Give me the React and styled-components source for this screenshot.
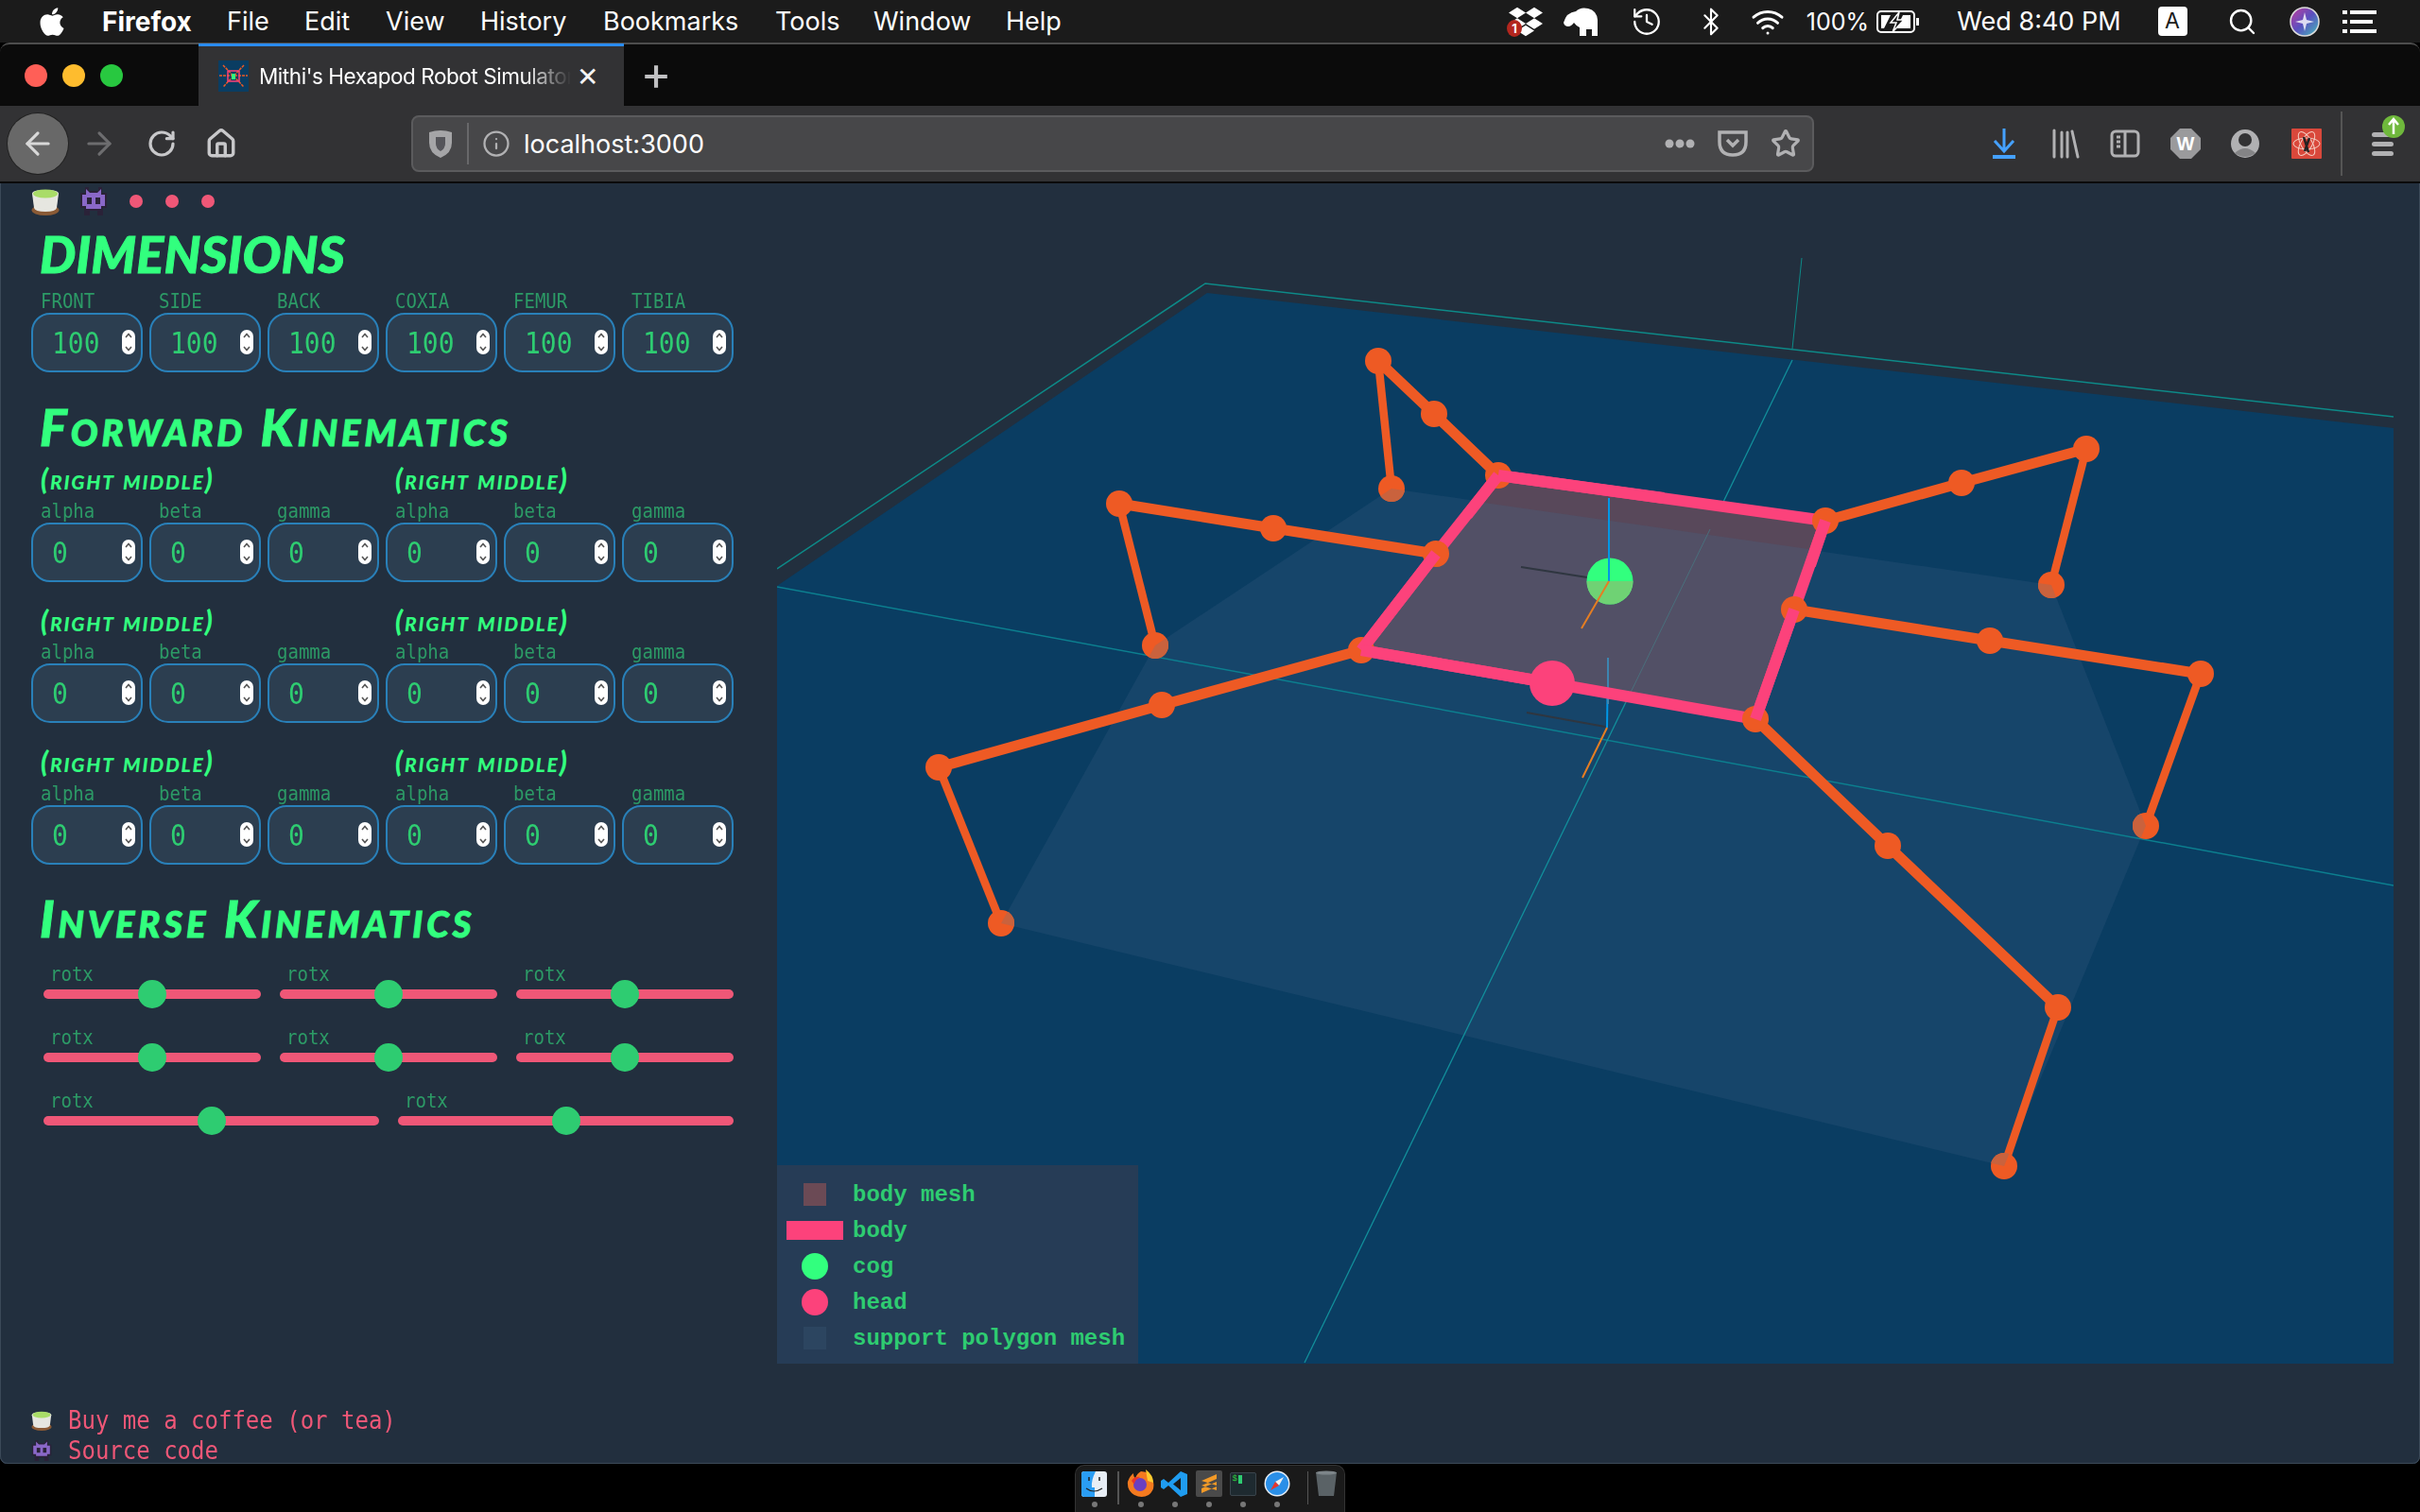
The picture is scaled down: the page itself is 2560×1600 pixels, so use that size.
import React from "react";
import styled, { createGlobalStyle } from "styled-components";
import { FaApple, FaDropbox } from "react-icons/fa";
import {
  ArrowLeft,
  ArrowRight,
  RotateCw,
  Home,
  Info,
  Star,
  Bluetooth,
  Wifi,
  Search,
  History,
} from "lucide-react";

const menuItems = [
  ["File", 82],
  ["Edit", 86],
  ["View", 100],
  ["History", 130],
  ["Bookmarks", 182],
  ["Tools", 104],
  ["Window", 140],
  ["Help", 90],
];

// all coordinates of the plot are page pixels, see viewBox on the Scene
const legs = [
  [[1585, 503], [1517, 438], [1458, 382], [1472, 517]],
  [[1519, 586], [1347, 559], [1184, 533], [1222, 683]],
  [[1440, 688], [1229, 746], [993, 812], [1059, 977]],
  [[1931, 551], [2075, 511], [2207, 475], [2170, 619]],
  [[1898, 645], [2105, 678], [2328, 713], [2270, 874]],
  [[1857, 761], [1997, 895], [2177, 1066], [2120, 1234]],
];
const support = "1472,517 2170,619 2270,874 2120,1234 1059,977 1222,683";
const body = "1585,503 1931,551 1898,645 1857,761 1642,723 1440,688 1519,586";
// pink pieces that lie over the shoulder joints
const bodyOver = [
  "1440,688 1519,586",
  "1857,761 1898,645",
  "1915,598 1931,551",
  "1552,545 1585,503",
  "1760,527 1585,503",
  "1642,723 1440,688",
];
const pts = (a) => a.map((p) => p.join(",")).join(" ");

const dimensions = ["FRONT", "SIDE", "BACK", "COXIA", "FEMUR", "TIBIA"];
const angles = ["alpha", "beta", "gamma"];

const Tea = ({ size }) => (
  <svg width={size} height={size} viewBox="0 0 30 30">
    <ellipse cx="15" cy="24.5" rx="14.5" ry="5.5" fill="#8a5a35" />
    <path d="M1 7 Q1 3 15 3 Q29 3 29 7 L27 22 Q26 26 15 26 Q4 26 3 22 Z" fill="#e6e6e0" />
    <ellipse cx="15" cy="7" rx="13" ry="4.5" fill="#a9dc68" />
  </svg>
);

const Alien = ({ size }) => (
  <svg width={size} height={size} viewBox="0 0 30 30">
    <path d="M6 0 H10 V4 H20 V0 H24 V6 H29 V22 H25 V30 H19 V25 H11 V30 H5 V22 H1 V6 H6 Z" fill="#2a2238" />
    <path d="M7 2 L11 6 H19 L23 2 V8 H27 V20 H23 V23 H7 V20 H3 V8 H7 Z" fill="#8a68c8" />
    <rect x="8" y="11" width="5" height="7" fill="#2a2238" />
    <rect x="17" y="11" width="5" height="7" fill="#2a2238" />
  </svg>
);

const Elephant = () => (
  <svg width="40" height="32" viewBox="0 0 40 32" fill="#fff">
    <path d="M2 17 Q5 6 15 5 Q20 0 28 2 Q37 4 38 14 V31 H32 V24 H26 V31 H19 V22 Q15 20 13 17 Q10 21 7 21 Q3 21 2 17 Z" />
  </svg>
);

const Battery = () => (
  <svg width="46" height="26" viewBox="0 0 46 26" fill="none" stroke="#fff" strokeWidth="2">
    <rect x="1" y="2" width="39" height="22" rx="4" />
    <rect x="42" y="9" width="3" height="8" fill="#fff" stroke="none" />
    <path d="M5 6 H15 L8 20 H5 Z M36 6 H28 L21 20 H36 Z" fill="#fff" stroke="none" />
    <path d="M24 3 L15 14 H21 L17 24 L29 11 H22 Z" fill="#1b1b1b" stroke="#fff" strokeWidth="1.5" />
  </svg>
);

const MenuList = () => (
  <svg width="36" height="26" viewBox="0 0 36 26" fill="#fff">
    <rect x="0" y="1" width="5" height="4" />
    <rect x="8" y="1" width="28" height="4" />
    <rect x="0" y="11" width="5" height="4" />
    <rect x="8" y="11" width="24" height="4" />
    <rect x="0" y="21" width="5" height="4" />
    <rect x="8" y="21" width="28" height="4" />
  </svg>
);

const Siri = () => (
  <svg width="32" height="32" viewBox="0 0 32 32">
    <defs>
      <linearGradient id="siriA" x1="0" y1="0" x2="1" y2="1">
        <stop offset="0" stopColor="#c43c9c" />
        <stop offset="0.5" stopColor="#5a50c0" />
        <stop offset="1" stopColor="#44c0b8" />
      </linearGradient>
    </defs>
    <circle cx="16" cy="16" r="15" fill="url(#siriA)" stroke="#ddd" strokeWidth="1.5" />
    <path d="M16 6 L18 14 L26 16 L18 18 L16 26 L14 18 L6 16 L14 14 Z" fill="#fff" opacity="0.8" />
  </svg>
);

const Favicon = () => (
  <svg width="32" height="33" viewBox="0 0 32 33">
    <rect width="32" height="33" fill="#0a3d62" />
    <path d="M5 5 L27 28 M27 5 L5 28 M1 16 H31" stroke="#ee5a24" strokeWidth="1.5" strokeDasharray="3 1" />
    <rect x="10" y="11" width="12" height="11" fill="none" stroke="#fc427b" strokeWidth="1.5" />
    <rect x="14" y="14" width="4" height="6" fill="#32ff7e" />
  </svg>
);

const ShieldIcon = () => (
  <svg width="26" height="30" viewBox="0 0 26 30">
    <path d="M1 3 Q13 -1 25 3 V14 Q25 25 13 30 Q1 25 1 14 Z" fill="#a5a5a7" />
    <path d="M8 8 H18 V15 Q18 20 13 23 Q8 20 8 15 Z" fill="#55555a" />
  </svg>
);

const PocketIcon = () => (
  <svg width="32" height="30" viewBox="0 0 32 30" fill="none" stroke="#b1b1b3" strokeWidth="3.5">
    <path d="M2 3 H30 V13 Q30 27 16 27 Q2 27 2 13 Z" />
    <path d="M10 11 L16 17 L22 11" />
  </svg>
);

const Dots = () => (
  <svg width="32" height="10" viewBox="0 0 32 10" fill="#b1b1b3">
    <circle cx="5" cy="5" r="4.5" />
    <circle cx="16" cy="5" r="4.5" />
    <circle cx="27" cy="5" r="4.5" />
  </svg>
);

const DownloadIcon = () => (
  <svg width="26" height="34" viewBox="0 0 26 34" fill="none" stroke="#45a1ff" strokeWidth="3">
    <path d="M13 1 V24 M3 14 L13 25 L23 14" />
    <rect x="1" y="29" width="24" height="4" fill="#45a1ff" stroke="none" />
  </svg>
);

const LibraryIcon = () => (
  <svg width="30" height="32" viewBox="0 0 30 32" fill="none" stroke="#b1b1b3" strokeWidth="3" strokeLinecap="round">
    <path d="M3 2 V30 M11 4 V30 M17 4 V30 M22 3 L28 30" />
  </svg>
);

const SidebarIcon = () => (
  <svg width="32" height="30" viewBox="0 0 32 30" fill="none" stroke="#b1b1b3" strokeWidth="3">
    <rect x="2" y="2" width="28" height="26" rx="4" />
    <path d="M16 2 V28 M7 8 H11 M7 13 H11 M7 18 H11" />
  </svg>
);

const WIcon = () => (
  <svg width="32" height="32" viewBox="0 0 32 32">
    <path d="M10 0 H22 L32 10 V22 L22 32 H10 L0 22 V10 Z" fill="#9a9a9c" />
    <text x="16" y="23" textAnchor="middle" fontFamily="Liberation Sans" fontWeight="700" fontSize="20" fill="#fff">W</text>
  </svg>
);

const AccountIcon = () => (
  <svg width="30" height="32" viewBox="0 0 30 32">
    <circle cx="15" cy="16" r="15" fill="#b1b1b3" />
    <circle cx="15" cy="12" r="7" fill="#323234" />
    <path d="M4 26 Q15 16 26 26 Q15 34 4 26" fill="#323234" opacity="0.35" />
  </svg>
);

const ReactIcon = () => (
  <svg width="32" height="32" viewBox="0 0 32 32" fill="none" stroke="#f5d0c5" strokeWidth="1">
    <rect width="32" height="32" rx="1" fill="#d9483b" stroke="none" />
    <ellipse cx="16" cy="16" rx="14" ry="6" />
    <ellipse cx="16" cy="16" rx="14" ry="6" transform="rotate(60 16 16)" />
    <ellipse cx="16" cy="16" rx="14" ry="6" transform="rotate(120 16 16)" />
    <path d="M13 9 L18 25 M19 10 L14 24" stroke="#222" strokeWidth="2.5" />
  </svg>
);

const Hamburger = () => (
  <HamburgerSvg width="50" height="52" viewBox="0 0 50 52">
    <rect x="16" y="14" width="23" height="5" rx="2.5" fill="#b1b1b3" />
    <rect x="16" y="24" width="23" height="5" rx="2.5" fill="#b1b1b3" />
    <rect x="16" y="34" width="23" height="5" rx="2.5" fill="#b1b1b3" />
    <circle cx="39" cy="8" r="12" fill="#6fb83c" />
    <path d="M39 16 V1 M34 6 L39 0 L44 6" stroke="#fff" strokeWidth="2.5" fill="none" />
  </HamburgerSvg>
);

const Scene = () => (
  <SceneSvg viewBox="822 194 1710 1249">
    <defs>
      <clipPath id="supportClip">
        <polygon points={support} />
      </clipPath>
    </defs>
    <polygon points="822,620 1277,310 2532,453 2532,1443 822,1443" fill="#0a3d62" />
    <polyline points="822,602 1275,300 2532,441" fill="none" stroke="#0d8a88" strokeWidth="1.5" />
    <line x1="1906" y1="273" x2="1896" y2="369" stroke="#0d8a88" strokeWidth="1" />
    <polygon points={support} fill="#16456a" />
    <line x1="822" y1="621" x2="2532" y2="937" stroke="#0c7f8f" strokeWidth="1.5" />
    <line x1="1896" y1="381" x2="1380" y2="1442" stroke="#128f9b" strokeWidth="1.3" />

    <line x1="1701" y1="696" x2="1700" y2="770" stroke="#0097e6" strokeWidth="2" />
    <line x1="1700" y1="770" x2="1674" y2="823" stroke="#e67e22" strokeWidth="2" />
    <line x1="1698" y1="769" x2="1615" y2="754" stroke="#2f3640" strokeWidth="2" />

    <polygon points={body} fill="#525066" />
    <polygon points="1585,503 1931,551 1920,582 1563,531" fill="#58485a" />
    <line x1="1809" y1="560" x2="1719" y2="745" stroke="#4a6f7c" strokeWidth="1" />
    <line x1="1701" y1="696" x2="1701" y2="745" stroke="#3d85b0" strokeWidth="2" />

    <line x1="1679" y1="611" x2="1609" y2="600" stroke="#2f3640" strokeWidth="2" />
    <circle cx="1703" cy="615" r="24.5" fill="#32ff7e" />
    <path d="M1678.5 615 A24.5 24.5 0 0 0 1727.5 615 Z" fill="#6fd274" />
    <line x1="1702" y1="527" x2="1702" y2="615" stroke="#0097e6" strokeWidth="2" />
    <line x1="1702" y1="615" x2="1673" y2="665" stroke="#e67e22" strokeWidth="2" />

    <polygon points={body} fill="none" stroke="#fc427b" strokeWidth="12" strokeLinejoin="miter" />

    {legs.map((leg, i) => (
      <g key={i}>
        <polyline points={pts(leg.slice(0, 3))} fill="none" stroke="#ee5a24" strokeWidth="11" />
        <polyline points={pts(leg.slice(2))} fill="none" stroke="#ee5a24" strokeWidth="8.5" />
        {leg.map((p, j) => (
          <circle key={j} cx={p[0]} cy={p[1]} r="14" fill="#ee5a24" />
        ))}
        <circle cx={leg[3][0]} cy={leg[3][1]} r="14" fill="#c9623d" clipPath="url(#supportClip)" />
      </g>
    ))}

    {bodyOver.map((segment) => (
      <polyline key={segment} points={segment} fill="none" stroke="#fc427b" strokeWidth="12" />
    ))}
    <circle cx="1642" cy="723" r="24" fill="#fc427b" />
  </SceneSvg>
);

const Field = ({ label, value }) => (
  <FieldWrap>
    <FieldLabel>{label}</FieldLabel>
    <NumberBox>
      <NumberValue>{value}</NumberValue>
      <Spinner>
        <svg width="14" height="26" viewBox="0 0 14 26" fill="none" stroke="#555" strokeWidth="1.6">
          <path d="M4 8 L7 4.5 L10 8 M4 18 L7 21.5 L10 18" />
        </svg>
      </Spinner>
    </NumberBox>
  </FieldWrap>
);

const LegGroup = () => (
  <div>
    <SubHeading>(right middle)</SubHeading>
    <FieldRow $cols={3}>
      {angles.map((a) => (
        <Field key={a} label={a} value="0" />
      ))}
    </FieldRow>
  </div>
);

const Slider = () => (
  <div>
    <SliderLabel>rotx</SliderLabel>
    <Track>
      <Thumb />
    </Track>
  </div>
);

const App = () => (
  <Screen>
    <GlobalStyle />
    <MenuBar>
      <AppleSlot>
        <FaApple size={34} color="#fff" />
      </AppleSlot>
      <MenuItem $w={132} $bold>
        Firefox
      </MenuItem>
      {menuItems.map(([name, w]) => (
        <MenuItem key={name} $w={w}>
          {name}
        </MenuItem>
      ))}
      <StatusArea>
        <StatusSlot $w={48}>
          <FaDropbox size={36} color="#fff" />
          <Badge>1</Badge>
        </StatusSlot>
        <StatusSlot $w={68}>
          <Elephant />
        </StatusSlot>
        <StatusSlot $w={72}>
          <History size={34} color="#fff" strokeWidth={1.6} />
        </StatusSlot>
        <StatusSlot $w={64}>
          <Bluetooth size={32} color="#fff" strokeWidth={1.6} />
        </StatusSlot>
        <StatusSlot $w={56}>
          <Wifi size={36} color="#fff" strokeWidth={2} />
        </StatusSlot>
        <StatusSlot $w={146}>
          <StatusText>100%</StatusText>
          <Battery />
        </StatusSlot>
        <StatusSlot $w={226}>
          <StatusText $big>Wed 8:40 PM</StatusText>
        </StatusSlot>
        <StatusSlot $w={56}>
          <KeyBadge>A</KeyBadge>
        </StatusSlot>
        <StatusSlot $w={92}>
          <Search size={32} color="#fff" strokeWidth={1.8} />
        </StatusSlot>
        <StatusSlot $w={40}>
          <Siri />
        </StatusSlot>
        <StatusSlot $w={76}>
          <MenuList />
        </StatusSlot>
      </StatusArea>
    </MenuBar>

    <TabStrip>
      <Lights>
        <Light $c="#ff5f57" />
        <Light $c="#febc2e" />
        <Light $c="#28c840" />
      </Lights>
      <Tab>
        <Favicon />
        <TabTitle>Mithi's Hexapod Robot Simulator</TabTitle>
        <TabClose>✕</TabClose>
      </Tab>
      <NewTab>+</NewTab>
    </TabStrip>

    <Toolbar>
      <ToolSlot $w={64}>
        <BackCircle>
          <ArrowLeft size={38} color="#d8d8d8" strokeWidth={2} />
        </BackCircle>
      </ToolSlot>
      <ToolSlot $w={66}>
        <ArrowRight size={38} color="#6d6d6f" strokeWidth={2} />
      </ToolSlot>
      <ToolSlot $w={66}>
        <RotateCw size={32} color="#c8c8ca" strokeWidth={2.4} />
      </ToolSlot>
      <ToolSlot $w={60}>
        <Home size={34} color="#c8c8ca" strokeWidth={2.4} />
      </ToolSlot>
      <UrlBar>
        <ToolSlot $w={57}>
          <ShieldIcon />
        </ToolSlot>
        <UrlSep />
        <ToolSlot $w={58}>
          <Info size={30} color="#b1b1b3" strokeWidth={1.8} />
        </ToolSlot>
        <UrlText>localhost:3000</UrlText>
        <UrlActions>
          <ToolSlot $w={56}>
            <Dots />
          </ToolSlot>
          <ToolSlot $w={56}>
            <PocketIcon />
          </ToolSlot>
          <ToolSlot $w={56}>
            <Star size={32} color="#b1b1b3" strokeWidth={2.4} />
          </ToolSlot>
        </UrlActions>
      </UrlBar>
      <ToolIcons>
        <ToolSlot $w={64}>
          <DownloadIcon />
        </ToolSlot>
        <ToolSlot $w={66}>
          <LibraryIcon />
        </ToolSlot>
        <ToolSlot $w={60}>
          <SidebarIcon />
        </ToolSlot>
        <ToolSlot $w={68}>
          <WIcon />
        </ToolSlot>
        <ToolSlot $w={58}>
          <AccountIcon />
        </ToolSlot>
        <ToolSlot $w={72}>
          <ReactIcon />
        </ToolSlot>
        <ToolSep />
        <ToolSlot $w={80}>
          <Hamburger />
        </ToolSlot>
      </ToolIcons>
    </Toolbar>

    <Page>
      <Main>
        <Sidebar>
          <NavRow>
            <EmojiBox>
              <Tea size={30} />
            </EmojiBox>
            <EmojiBox>
              <Alien size={30} />
            </EmojiBox>
            <NavDots>
              <NavDot />
              <NavDot />
              <NavDot />
            </NavDots>
          </NavRow>

          <Heading $top={15} $spacing={0.2}>
            DIMENSIONS
          </Heading>
          <FieldRow $cols={6} $top={12}>
            {dimensions.map((d) => (
              <Field key={d} label={d} value="100" />
            ))}
          </FieldRow>

          <Heading $top={36}>Forward Kinematics</Heading>
          <LegGrid>
            {[0, 1, 2, 3, 4, 5].map((i) => (
              <LegGroup key={i} />
            ))}
          </LegGrid>

          <Heading $top={35}>Inverse Kinematics</Heading>
          <SliderGrid $cols={3}>
            {[0, 1, 2, 3, 4, 5].map((i) => (
              <Slider key={i} />
            ))}
          </SliderGrid>
          <SliderGrid $cols={2} $top={24}>
            <Slider />
            <Slider />
          </SliderGrid>
        </Sidebar>

        <Plot>
          <Scene />
          <Legend>
            <LegendRow>
              <LegendMark>
                <MeshSwatch $c="#6b4a55" />
              </LegendMark>
              body mesh
            </LegendRow>
            <LegendRow>
              <LegendMark>
                <BodySwatch />
              </LegendMark>
              body
            </LegendRow>
            <LegendRow>
              <LegendMark>
                <DotSwatch $c="#32ff7e" />
              </LegendMark>
              cog
            </LegendRow>
            <LegendRow>
              <LegendMark>
                <DotSwatch $c="#fc427b" />
              </LegendMark>
              head
            </LegendRow>
            <LegendRow>
              <LegendMark>
                <MeshSwatch $c="#2c4560" />
              </LegendMark>
              support polygon mesh
            </LegendRow>
          </Legend>
        </Plot>
      </Main>

      <Footer>
        <FooterRow>
          <Tea size={22} />
          <FooterLink>Buy me a coffee (or tea)</FooterLink>
        </FooterRow>
        <FooterRow>
          <Alien size={22} />
          <FooterLink>Source code</FooterLink>
        </FooterRow>
      </Footer>
    </Page>

    <DockArea>
      <Dock>
        <DockSlot $w={39}>
          <DockIcon>
            <svg width="27" height="27" viewBox="0 0 27 27">
              <rect width="27" height="27" rx="3" fill="#e8eef5" />
              <path d="M0 3 Q0 0 3 0 H15 Q10 10 11 17 H14 V27 H3 Q0 27 0 24 Z" fill="#2a9df4" />
              <path d="M8 6 V10 M19 6 V10" stroke="#222" strokeWidth="1.5" />
              <path d="M5 18 Q13 24 22 18" stroke="#222" strokeWidth="1.2" fill="none" />
            </svg>
          </DockIcon>
          <DockDot />
        </DockSlot>
        <DockSep />
        <DockApps>
          <DockSlot $w={36}>
            <DockIcon>
              <svg width="30" height="30" viewBox="0 0 30 30">
                <path d="M15 2 Q26 2 28 13 Q30 22 23 27 Q16 31 8 27 Q0 22 1 13 Q3 7 7 4 Q7 8 9 9 Q11 4 15 2" fill="#f47a1f" />
                <path d="M20 0 Q28 6 28 14 L22 12 Z" fill="#ffcb2e" />
                <circle cx="14" cy="16" r="7" fill="#6a3fc0" />
                <path d="M5 12 Q8 7 14 8 Q8 11 8 16 Z" fill="#e8352a" />
              </svg>
            </DockIcon>
            <DockDot />
          </DockSlot>
          <DockSlot $w={36}>
            <DockIcon>
              <svg width="29" height="29" viewBox="0 0 29 29">
                <path d="M21 1 L28 4 V25 L21 28 L8 16 L3 20 L0 18 V11 L3 9 L8 13 Z M21 8 L13 14.5 L21 21 Z" fill="#1f9cf0" />
              </svg>
            </DockIcon>
            <DockDot />
          </DockSlot>
          <DockSlot $w={36}>
            <DockIcon>
              <svg width="28" height="28" viewBox="0 0 28 28">
                <rect width="28" height="28" rx="2" fill="#4a4a4a" />
                <path d="M6 11 L22 4 V9 L6 16 Z M6 16 L22 21 V16 L6 11 Z M6 19 L22 12 V17 L6 24 Z" fill="#f39a27" />
              </svg>
            </DockIcon>
            <DockDot />
          </DockSlot>
          <DockSlot $w={36}>
            <DockIcon>
              <TerminalBox>
                <TerminalPrompt>$</TerminalPrompt>
                <TerminalCursor />
              </TerminalBox>
            </DockIcon>
            <DockDot />
          </DockSlot>
          <DockSlot $w={36}>
            <DockIcon>
              <svg width="28" height="28" viewBox="0 0 28 28">
                <circle cx="14" cy="14" r="13.5" fill="#e8eef5" />
                <circle cx="14" cy="14" r="12" fill="#2a8fe8" />
                <path d="M21 7 L12 12 L16 16 Z" fill="#f0f0f0" />
                <path d="M7 21 L12 12 L16 16 Z" fill="#e8352a" />
              </svg>
            </DockIcon>
            <DockDot />
          </DockSlot>
        </DockApps>
        <DockSep />
        <DockSlot $w={38}>
          <DockIcon>
            <svg width="24" height="28" viewBox="0 0 24 28">
              <path d="M1 2 H23 L20 27 H4 Z" fill="#5a6266" />
              <ellipse cx="12" cy="2.5" rx="11" ry="2" fill="#7d8589" />
            </svg>
          </DockIcon>
        </DockSlot>
      </Dock>
    </DockArea>
  </Screen>
);

export default App;

const GlobalStyle = createGlobalStyle`
  html, body {
    margin: 0;
    padding: 0;
    background: #000;
  }
`;

const Screen = styled.div`
  width: 2560px;
  height: 1600px;
  display: flex;
  flex-direction: column;
  overflow: hidden;
  background: #000;
  font-family: "Inter", "Liberation Sans", sans-serif;
`;

const MenuBar = styled.div`
  height: 45px;
  display: flex;
  align-items: center;
  padding-right: 26px;
  background: #1b1b1b;
  color: #fff;
  font-size: 27px;
`;

const AppleSlot = styled.div`
  width: 108px;
  padding-left: 38px;
  box-sizing: border-box;
  display: flex;
`;

const MenuItem = styled.div`
  width: ${(p) => p.$w}px;
  font-size: ${(p) => (p.$bold ? 28 : 27)}px;
  font-weight: ${(p) => (p.$bold ? 700 : 400)};
`;

const StatusArea = styled.div`
  margin-left: auto;
  display: flex;
  align-items: center;
`;

const StatusSlot = styled.div`
  width: ${(p) => p.$w}px;
  height: 45px;
  position: relative;
  display: flex;
  align-items: center;
  justify-content: center;
  gap: 8px;
`;

const Badge = styled.span`
  position: absolute;
  left: 4px;
  top: 21px;
  width: 16px;
  height: 18px;
  border-radius: 50%;
  background: #b3261e;
  color: #fff;
  font-size: 13px;
  font-weight: 700;
  text-align: center;
  line-height: 18px;
`;

const StatusText = styled.span`
  font-size: ${(p) => (p.$big ? 27 : 25)}px;
  white-space: nowrap;
`;

const KeyBadge = styled.div`
  width: 31px;
  height: 31px;
  border-radius: 4px;
  background: #fff;
  color: #1b1b1b;
  font-size: 23px;
  text-align: center;
  line-height: 31px;
`;

const TabStrip = styled.div`
  height: 65px;
  display: flex;
  align-items: stretch;
  background: #0b0b0b;
  border-top: 2px solid #4d4d4d;
  border-radius: 10px 10px 0 0;
`;

const Lights = styled.div`
  width: 210px;
  padding-left: 26px;
  box-sizing: border-box;
  display: flex;
  align-items: center;
  gap: 16px;
`;

const Light = styled.div`
  width: 24px;
  height: 24px;
  border-radius: 50%;
  background: ${(p) => p.$c};
`;

const Tab = styled.div`
  width: 450px;
  box-sizing: border-box;
  display: flex;
  align-items: center;
  padding-left: 21px;
  background: #323234;
  border-top: 3px solid #2a8cf0;
  margin-top: -1px;
`;

const TabTitle = styled.div`
  width: 330px;
  margin-left: 11px;
  overflow: hidden;
  white-space: nowrap;
  color: #fff;
  font-size: 22.5px;
  letter-spacing: -0.45px;
  -webkit-mask-image: linear-gradient(90deg, #000 85%, transparent);
  mask-image: linear-gradient(90deg, #000 85%, transparent);
`;

const TabClose = styled.div`
  margin-left: 6px;
  color: #f4f4f4;
  font-size: 28px;
`;

const NewTab = styled.div`
  width: 68px;
  text-align: center;
  color: #c0c0c2;
  font-size: 50px;
  font-weight: 400;
  line-height: 60px;
`;

const Toolbar = styled.div`
  height: 80px;
  padding-left: 8px;
  display: flex;
  align-items: center;
  background: #323234;
  border-bottom: 2px solid #0b0b0b;
`;

const ToolSlot = styled.div`
  width: ${(p) => p.$w}px;
  flex-shrink: 0;
  display: flex;
  align-items: center;
  justify-content: center;
`;

const BackCircle = styled.div`
  width: 64px;
  height: 64px;
  border-radius: 50%;
  background: #686868;
  box-shadow: 0 0 0 1px #222;
  display: flex;
  align-items: center;
  justify-content: center;
`;

const UrlBar = styled.div`
  width: 1484px;
  height: 60px;
  margin-left: 171px;
  box-sizing: border-box;
  display: flex;
  align-items: center;
  background: #474749;
  border: 2px solid #5b5b5d;
  border-radius: 8px;
`;

const UrlSep = styled.div`
  width: 2px;
  height: 44px;
  background: #68686a;
`;

const UrlText = styled.div`
  color: #fff;
  font-size: 27px;
`;

const UrlActions = styled.div`
  margin-left: auto;
  display: flex;
`;

const ToolIcons = styled.div`
  margin-left: 169px;
  display: flex;
  align-items: center;
`;

const ToolSep = styled.div`
  width: 2px;
  height: 68px;
  background: #555;
`;

const HamburgerSvg = styled.svg`
  overflow: visible;
`;

const Page = styled.div`
  height: 1355px;
  flex-shrink: 0;
  background: #222f3e;
  border-radius: 0 0 8px 8px;
  box-shadow: inset 1px 0 0 #3b4958, inset -1px 0 0 #3b4958, inset 0 -1px 0 #3b4958;
`;

const Main = styled.div`
  height: 1249px;
  display: flex;
`;

const Sidebar = styled.div`
  width: 822px;
  box-sizing: border-box;
  padding: 0 46px 0 33px;
  font-family: "DejaVu Sans Mono", "Liberation Mono", monospace;
`;

const NavRow = styled.div`
  height: 38px;
  display: flex;
  align-items: center;
  gap: 21px;
`;

const EmojiBox = styled.div`
  width: 30px;
  display: flex;
  justify-content: center;
`;

const NavDots = styled.div`
  display: flex;
  gap: 24px;
  margin-left: 2px;
`;

const NavDot = styled.div`
  width: 14px;
  height: 14px;
  border-radius: 50%;
  background: #ef5777;
`;

const Heading = styled.h2`
  margin: ${(p) => p.$top}px 0 0 9px;
  height: 48px;
  color: #32ff7e;
  font-family: "Lato", "Liberation Sans", sans-serif;
  font-size: 54px;
  font-weight: 900;
  font-style: italic;
  font-variant: small-caps;
  letter-spacing: ${(p) => p.$spacing ?? 4}px;
  -webkit-text-stroke: 1px #32ff7e;
  line-height: 44px;
  white-space: nowrap;
`;

const SubHeading = styled.h3`
  margin: 0 0 7.5px 10px;
  height: 26px;
  color: #32ff7e;
  font-family: "Lato", "Liberation Sans", sans-serif;
  font-size: 30px;
  font-weight: 900;
  font-style: italic;
  font-variant: small-caps;
  letter-spacing: 1.8px;
  line-height: 22px;
  white-space: nowrap;
`;

const LegGrid = styled.div`
  margin-top: 17px;
  display: grid;
  grid-template-columns: 1fr 1fr;
  column-gap: 7px;
  row-gap: 29px;
`;

const FieldRow = styled.div`
  margin-top: ${(p) => p.$top || 0}px;
  display: grid;
  grid-template-columns: repeat(${(p) => p.$cols}, 118px);
  column-gap: 7px;
`;

const FieldWrap = styled.div`
  display: flex;
  flex-direction: column;
`;

const FieldLabel = styled.div`
  height: 24px;
  padding-left: 10px;
  color: #2c9a66;
  font-size: 19px;
  line-height: 22px;
  transform: scaleY(1.1);
`;

const NumberBox = styled.div`
  height: 63px;
  box-sizing: border-box;
  position: relative;
  padding-left: 20px;
  background: #2c3e50;
  border: 2px solid #2980b9;
  border-radius: 20px;
  color: #2ecc71;
  font-size: 28px;
  line-height: 61px;
`;

const NumberValue = styled.span`
  display: inline-block;
  transform: scaleY(1.12);
`;

const Spinner = styled.div`
  position: absolute;
  right: 6px;
  top: 16px;
  width: 14px;
  height: 26px;
  border-radius: 7px;
  background: #fff;
  display: flex;
`;

const SliderGrid = styled.div`
  margin: ${(p) => (p.$top ? p.$top : 21.5)}px 0 0 13px;
  display: grid;
  grid-template-columns: repeat(${(p) => p.$cols}, 1fr);
  column-gap: 20px;
  row-gap: 24px;
`;

const SliderLabel = styled.div`
  height: 23px;
  padding-left: 7px;
  color: #2c9a66;
  font-size: 19px;
  line-height: 22px;
  transform: scaleY(1.1);
`;

const Track = styled.div`
  height: 20px;
  display: flex;
  align-items: center;
  justify-content: center;
  &::before {
    content: "";
    width: 100%;
    height: 10px;
    border-radius: 5px;
    background: #ef5777;
  }
  position: relative;
`;

const Thumb = styled.div`
  position: absolute;
  left: 50%;
  top: -5px;
  margin-left: -15px;
  width: 30px;
  height: 30px;
  border-radius: 50%;
  background: #2ecc71;
`;

const Plot = styled.div`
  width: 1710px;
  position: relative;
`;

const SceneSvg = styled.svg`
  display: block;
  width: 1710px;
  height: 1249px;
`;

const Legend = styled.div`
  position: absolute;
  left: 0;
  bottom: 0;
  width: 382px;
  height: 210px;
  box-sizing: border-box;
  padding-top: 12px;
  background: #263c56;
  color: #2ecc71;
  font-family: "Liberation Mono", monospace;
  font-size: 24px;
  font-weight: 700;
`;

const LegendRow = styled.div`
  height: 38px;
  display: flex;
  align-items: center;
  white-space: nowrap;
`;

const LegendMark = styled.div`
  width: 80px;
  display: flex;
  justify-content: center;
`;

const MeshSwatch = styled.div`
  width: 24px;
  height: 24px;
  background: ${(p) => p.$c};
`;

const BodySwatch = styled.div`
  width: 60px;
  height: 20px;
  background: #fc427b;
`;

const DotSwatch = styled.div`
  width: 28px;
  height: 28px;
  border-radius: 50%;
  background: ${(p) => p.$c};
`;

const Footer = styled.div`
  height: 106px;
  box-sizing: border-box;
  padding: 45px 0 0 33px;
  display: flex;
  flex-direction: column;
  gap: 3px;
`;

const FooterRow = styled.div`
  height: 30px;
  display: flex;
  align-items: center;
  gap: 17px;
`;

const FooterLink = styled.a`
  display: inline-block;
  color: #ef5777;
  font-family: "DejaVu Sans Mono", "Liberation Mono", monospace;
  font-size: 24px;
  transform: scaleY(1.1);
`;

const DockArea = styled.div`
  flex: 1;
  display: flex;
  justify-content: center;
  padding-top: 1px;
`;

const Dock = styled.div`
  width: 286px;
  box-sizing: border-box;
  display: flex;
  background: #1a1a1a;
  border: 1px solid #333;
  border-bottom: 0;
  border-radius: 10px 10px 0 0;
`;

const DockSlot = styled.div`
  width: ${(p) => p.$w}px;
  flex-shrink: 0;
  display: flex;
  flex-direction: column;
  align-items: center;
`;

const DockIcon = styled.div`
  height: 38px;
  display: flex;
  align-items: center;
  justify-content: center;
`;

const DockDot = styled.div`
  width: 6px;
  height: 6px;
  border-radius: 50%;
  background: #777;
`;

const DockApps = styled.div`
  display: flex;
  margin: 0 9px 0 5px;
`;

const DockSep = styled.div`
  width: 1.5px;
  height: 35px;
  margin: 6px 0 0 5px;
  background: #555;
`;

const TerminalBox = styled.div`
  width: 28px;
  height: 25px;
  box-sizing: border-box;
  padding: 2px;
  border: 1px solid #3a444c;
  border-radius: 2px;
  background: #1e2a30;
  display: flex;
  gap: 1px;
`;

const TerminalPrompt = styled.span`
  color: #2ecc40;
  font-family: "Liberation Mono", monospace;
  font-size: 9px;
  line-height: 9px;
`;

const TerminalCursor = styled.span`
  width: 4px;
  height: 9px;
  background: #2ecc71;
`;
